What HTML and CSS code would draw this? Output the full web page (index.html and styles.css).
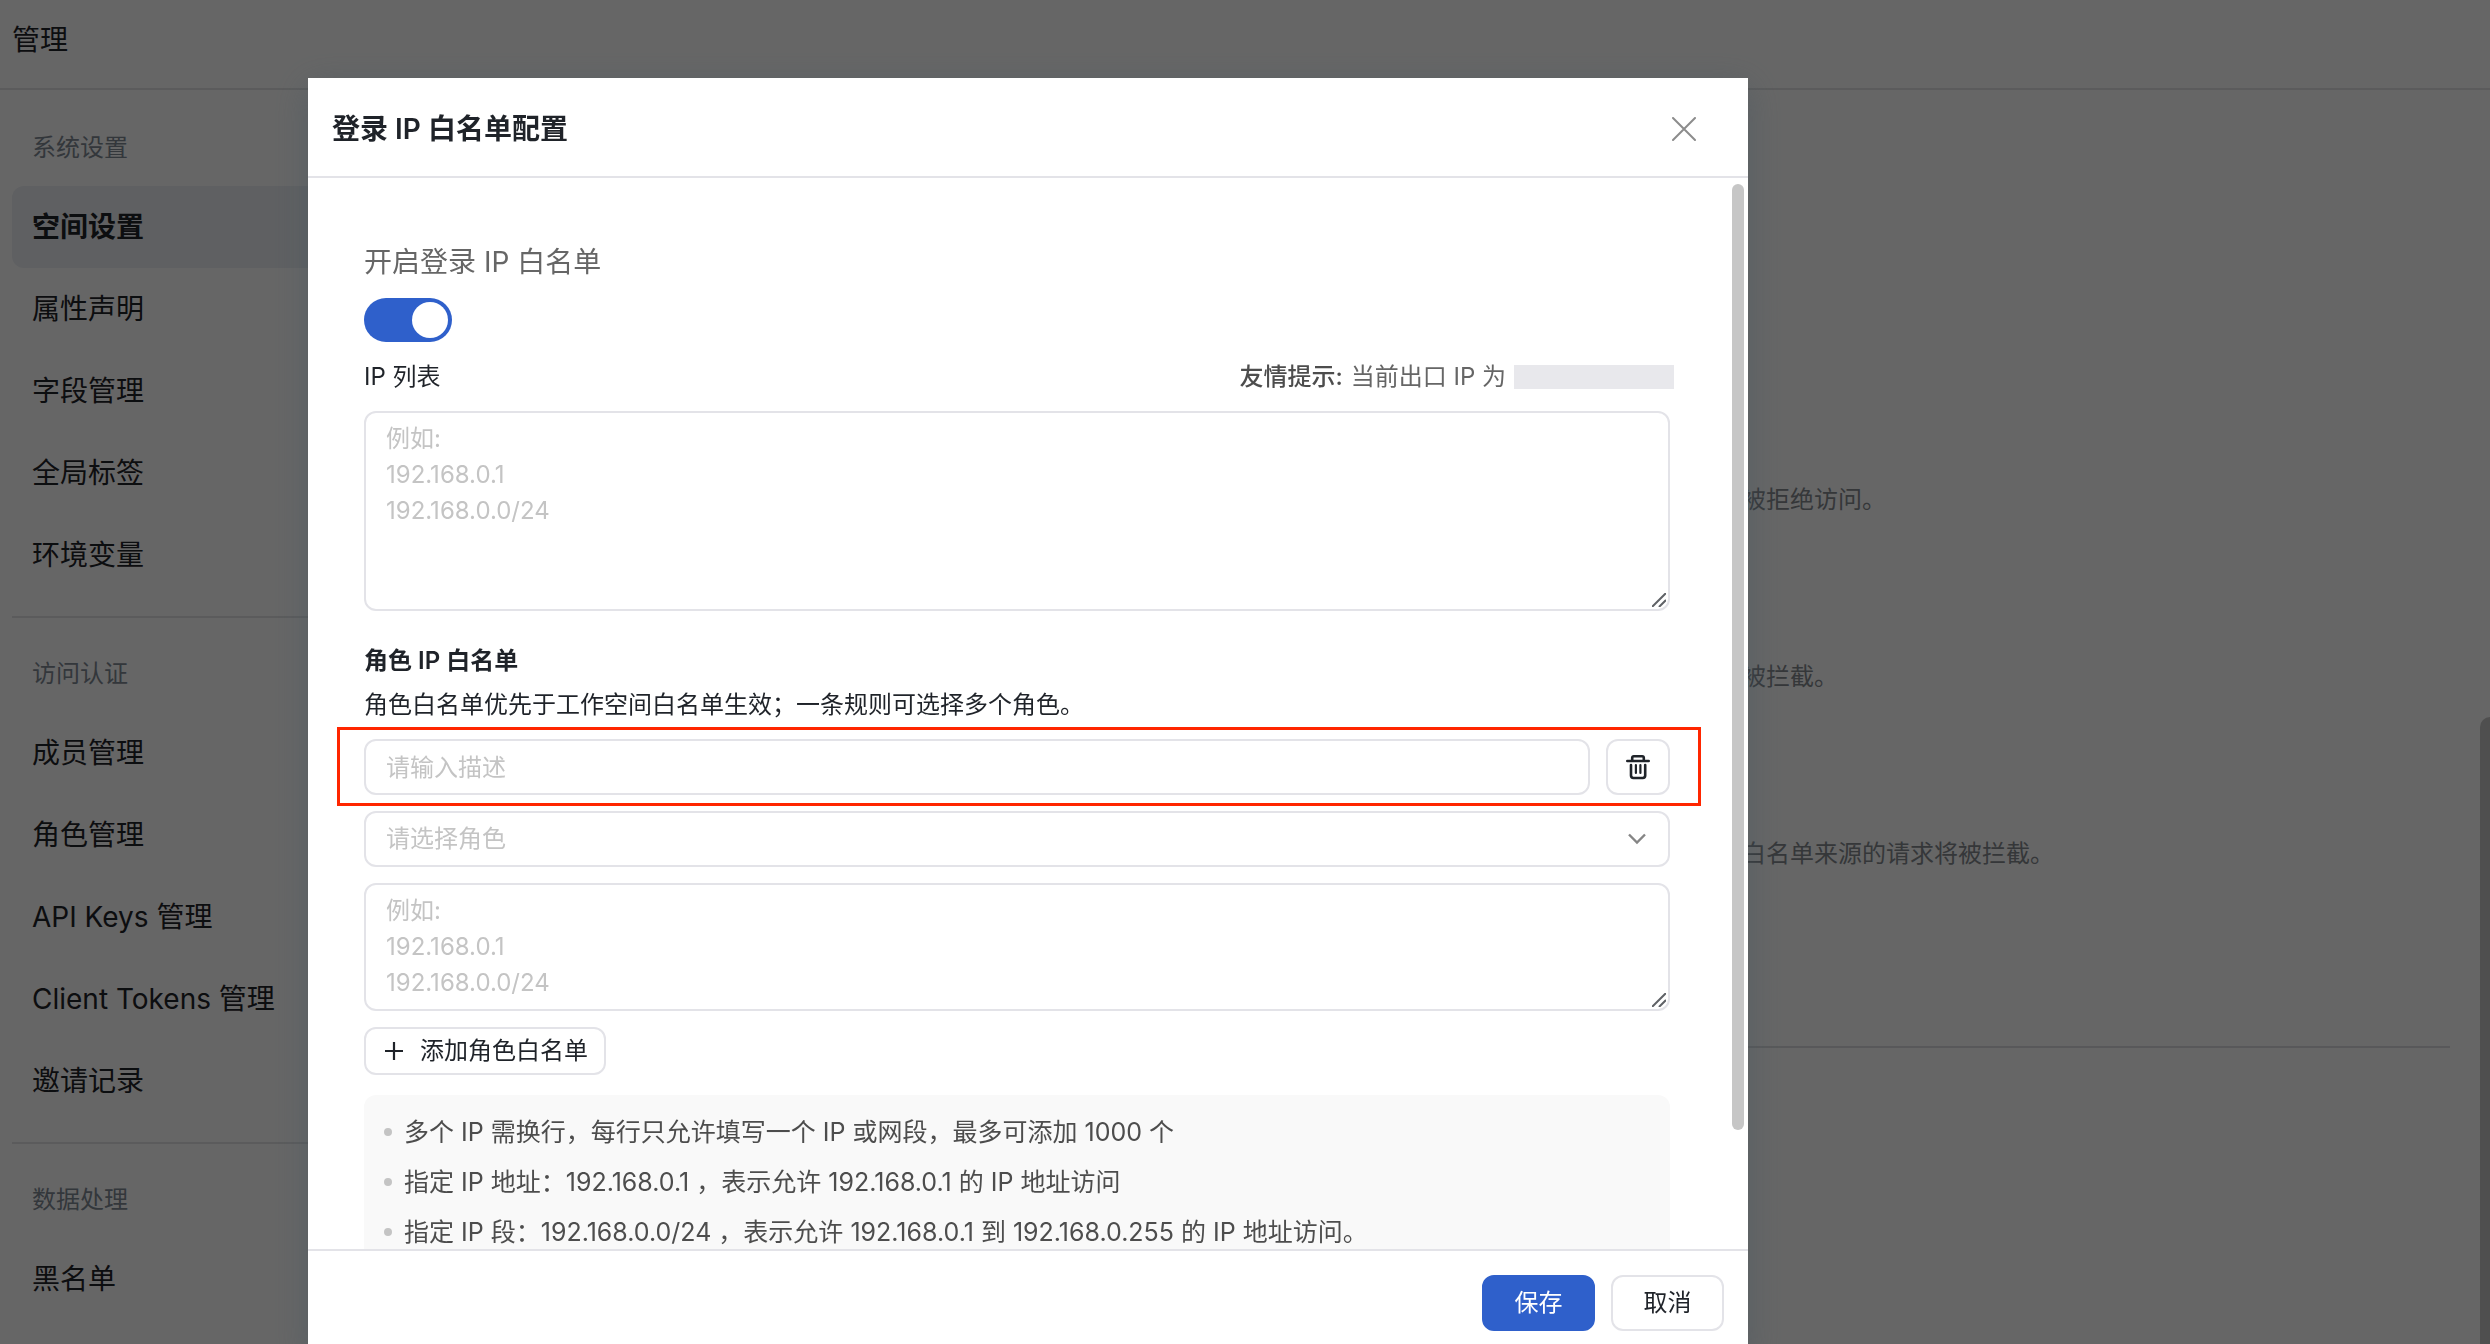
FILE: index.html
```html
<!DOCTYPE html>
<html lang="zh-CN">
<head>
  <meta charset="UTF-8" />
  <meta name="viewport" content="width=device-width, initial-scale=1.0"/>
  <title>登录 IP 白名单配置</title>
  <link rel="stylesheet" href="styles.css">
</head>
<body>
  <div class="page">
    <header class="topbar">管理</header>

    <div class="layout">
      <nav class="sidebar">
        <div class="group">
          <h3>系统设置</h3>
          <a href="#" class="active">空间设置</a>
          <a href="#">属性声明</a>
          <a href="#">字段管理</a>
          <a href="#">全局标签</a>
          <a href="#">环境变量</a>
        </div>
        <div class="group">
          <h3>访问认证</h3>
          <a href="#">成员管理</a>
          <a href="#">角色管理</a>
          <a href="#">API Keys 管理</a>
          <a href="#">Client Tokens 管理</a>
          <a href="#">邀请记录</a>
        </div>
        <div class="group">
          <h3>数据处理</h3>
          <a href="#">黑名单</a>
        </div>
      </nav>

      <main class="content">
        <p>被拒绝访问。</p>
        <p>被拦截。</p>
        <p>白名单来源的请求将被拦截。</p>
        <hr>
      </main>
    </div>
    <div class="page-scroll"></div>
  </div>

  <div class="overlay">
    <div class="modal" role="dialog" aria-labelledby="modalTitle">
      <div class="modal-header">
        <h2 id="modalTitle">登录 IP 白名单配置</h2>
        <button type="button" class="close" aria-label="关闭">
          <svg width="24" height="24" viewBox="0 0 24 24" fill="none" stroke="#8c8c8c" stroke-width="2" stroke-linecap="round">
            <path d="M1 1L23 23M23 1L1 23"/>
          </svg>
        </button>
      </div>

      <div class="modal-body">
        <label class="switch-label" for="enabled">开启登录 IP 白名单</label>
        <input type="checkbox" class="switch" id="enabled" checked>

        <div class="list-head">
          <label for="ipList">IP 列表</label>
          <div class="hint"><b>友情提示:</b> 当前出口 IP 为 <span class="mask"></span></div>
        </div>
        <div class="area">
          <textarea id="ipList" class="field tall" placeholder="例如:&#10;192.168.0.1&#10;192.168.0.0/24"></textarea>
          <svg class="grip" width="14" height="14" viewBox="0 0 14 14" fill="none" stroke="#5f6266" stroke-width="2"><path d="M0 14L14 0M7 14L14 7"/></svg>
        </div>

        <h4>角色 IP 白名单</h4>
        <p class="desc">角色白名单优先于工作空间白名单生效；一条规则可选择多个角色。</p>

        <div class="rule">
          <div class="rule-row">
            <input type="text" class="field" placeholder="请输入描述" aria-label="描述">
            <button type="button" class="btn trash" aria-label="删除">
              <svg width="24" height="26" viewBox="0 0 24 26" fill="none" stroke="#1f2329" stroke-width="2.6" stroke-linecap="round" stroke-linejoin="round">
                <path d="M1.3 7H22.7M6.2 7V3.8Q6.2 2.2 7.8 2.2H16.2Q17.8 2.2 17.8 3.8V7"/>
                <path d="M5 11V21.6Q5 24 7.4 24H16.8Q19.2 24 19.2 21.6V11"/>
                <path d="M9.9 11V19M14.4 11V19" stroke-width="2.2"/>
              </svg>
            </button>
          </div>
          <div class="area">
            <select class="field" aria-label="角色">
              <option>请选择角色</option>
            </select>
            <svg class="chevron" width="18" height="12" viewBox="0 0 18 12" fill="none" stroke="#858585" stroke-width="2.4"><path d="M1 1.5L9 9.5L17 1.5"/></svg>
          </div>
          <div class="area">
            <textarea class="field" aria-label="角色 IP 列表" placeholder="例如:&#10;192.168.0.1&#10;192.168.0.0/24"></textarea>
            <svg class="grip" width="14" height="14" viewBox="0 0 14 14" fill="none" stroke="#5f6266" stroke-width="2"><path d="M0 14L14 0M7 14L14 7"/></svg>
          </div>
          <button type="button" class="btn add">
            <svg width="18" height="18" viewBox="0 0 18 18" fill="none" stroke="#1f2329" stroke-width="2.2"><path d="M0 9H18M9 0V18"/></svg>
            添加角色白名单
          </button>
        </div>

        <ul class="notes">
          <li>多个 IP 需换行，每行只允许填写一个 IP 或网段，最多可添加 1000 个</li>
          <li>指定 IP 地址：192.168.0.1 ，表示允许 192.168.0.1 的 IP 地址访问</li>
          <li>指定 IP 段：192.168.0.0/24 ，表示允许 192.168.0.1 到 192.168.0.255 的 IP 地址访问。</li>
        </ul>
        <div class="body-scroll"></div>
      </div>

      <div class="modal-footer">
        <button type="button" class="btn primary">保存</button>
        <button type="button" class="btn">取消</button>
      </div>
    </div>
  </div>
</body>
</html>
```

FILE: styles.css
```css
* { box-sizing: border-box; }
body { margin: 0; font-family: Inter, "Noto Sans CJK SC", sans-serif; font-size: 24px; line-height: 36px; color: #1f2329; background: #fff; overflow: hidden; }
h2, h3, h4, p, ul { margin: 0; padding: 0; }
button, input, select, textarea { font: inherit; color: inherit; }
svg { display: block; }

/* page behind the dialog */
.page { position: relative; height: 100vh; overflow: hidden; }
.topbar { height: 90px; padding: 20px 12px; font-size: 28px; line-height: 40px; border-bottom: 2px solid #e3e4e6; }
.layout { display: flex; }
.sidebar { width: 324px; padding: 2px 0 0 12px; flex-shrink: 0; }
.group + .group { margin-top: 20px; border-top: 2px solid #e3e4e6; }
.group h3 { padding: 38px 20px 20px; font-size: 24px; font-weight: 400; color: #7f8a95; }
.group a { display: block; padding: 21px 20px; font-size: 28px; line-height: 40px; color: #1f2329; text-decoration: none; border-radius: 12px; }
.group a.active { background: #edf0f4; font-weight: 600; }
.content { flex: 1; padding: 392px 40px 0 0; }
.content p { margin: 0 0 141px 1418px; color: #858a90; white-space: nowrap; }
.content hr { margin: 174px 0 0; border: 0; border-top: 2px solid #dcdde0; }
.page-scroll { position: absolute; right: 0; top: 717px; bottom: 0; width: 10px; background: #c6c6c6; border-radius: 10px 0 0 0; }

.overlay { position: fixed; inset: 0; padding: 78px 0 0 308px; background: rgba(0,0,0,0.6); overflow: hidden; }
.modal { max-width: 1440px; background: #fff; box-shadow: 0 8px 32px rgba(70,85,95,0.5); }
.modal-header { display: flex; align-items: center; justify-content: space-between; height: 100px; padding: 4px 52px 0 24px; border-bottom: 2px solid #e3e3e8; }
.modal-header h2 { font-size: 28px; line-height: 40px; font-weight: 600; }
.close { padding: 0; border: 0; background: none; cursor: pointer; }

.modal-body { position: relative; height: calc(100vh - 273px); padding: 64px 78px 0 56px; overflow: hidden; }
.switch-label { display: block; font-size: 28px; line-height: 40px; color: #666; }
.switch { display: block; appearance: none; width: 88px; height: 44px; margin: 16px 0 0; padding: 4px; border-radius: 22px; background: #c9cdd4; cursor: pointer; }
.switch::before { content: ""; display: block; width: 36px; height: 36px; border-radius: 50%; background: #fff; }
.switch:checked { background: #2f60cb; }
.switch:checked::before { margin-left: auto; }
.list-head { display: flex; justify-content: space-between; padding: 17px 0 16px; }
.hint { display: flex; align-items: center; gap: 8px; margin-right: -4px; color: #666; }
.hint b { font-weight: 500; color: #4d4d4d; }
.mask { width: 160px; height: 24px; background: #e8e8ec; }

.field { display: block; width: 100%; height: 56px; padding: 8px 20px; border: 2px solid #e3e3e8; border-radius: 12px; background: #fff; outline: none; }
.field::placeholder { color: #c4c4c4; opacity: 1; }
textarea.field { height: 128px; resize: none; overflow: hidden; }
textarea.tall { height: 200px; }
select.field { appearance: none; color: #c4c4c4; }
.area { position: relative; }
.grip { position: absolute; right: 4px; bottom: 4px; pointer-events: none; }
.chevron { position: absolute; right: 24px; top: 22px; pointer-events: none; }

.modal-body h4 { margin: 32px 0 8px; font-size: 24px; font-weight: 600; }
.desc { margin-bottom: 16px; }
.rule { display: flex; flex-direction: column; gap: 16px; }
.rule-row { position: relative; display: flex; gap: 16px; }
/* red frame round the description row */
.rule-row::after { content: ""; position: absolute; inset: -12px -31px -11px -27px; border: 3px solid #ff2600; pointer-events: none; }

.btn { display: flex; align-items: center; justify-content: center; height: 56px; min-width: 113px; padding: 0 16px; border: 2px solid #e3e3e8; border-radius: 12px; background: #fff; cursor: pointer; }
.btn.trash { min-width: 64px; padding: 0; }
.btn.add { align-self: flex-start; height: 48px; gap: 17px; padding: 0 16px 0 19px; }
.btn.primary { background: #2f60cb; border-color: #2f60cb; color: #fff; }

.notes { margin-top: 20px; padding: 12px 20px; list-style: none; background: #f9f9f9; border-radius: 12px; font-size: 25px; color: #4d4d4d; }
.notes li { display: flex; align-items: center; gap: 12px; height: 50px; }
.notes li::before { content: ""; width: 8px; height: 8px; border-radius: 50%; background: #c4c4c4; }
.body-scroll { position: absolute; top: 6px; right: 4px; width: 12px; height: 946px; border-radius: 6px; background: #c6c6c6; }

.modal-footer { display: flex; justify-content: flex-end; gap: 16px; padding: 24px; border-top: 2px solid #e3e3e8; }
```
